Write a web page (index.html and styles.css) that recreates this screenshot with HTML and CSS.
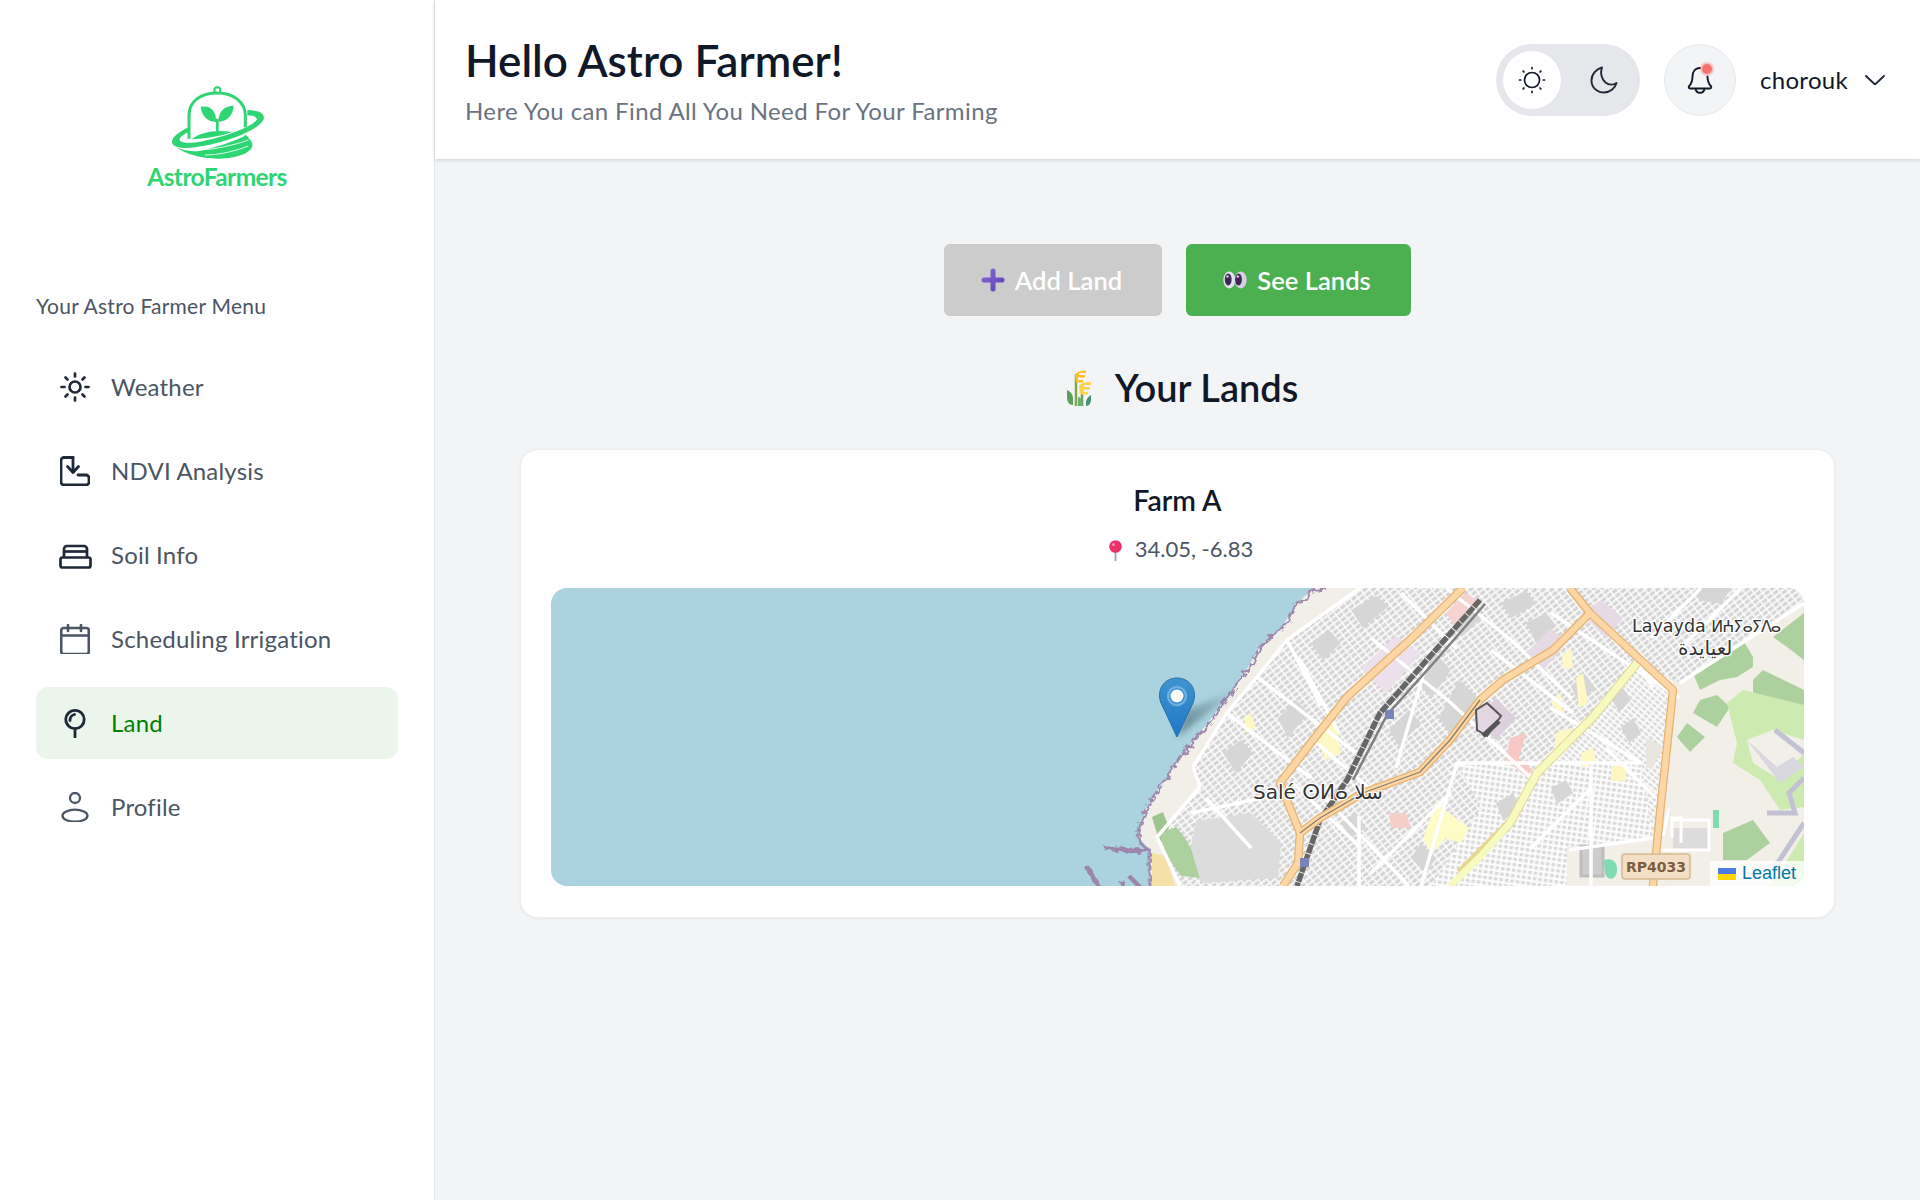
FILE: index.html
```html
<!DOCTYPE html>
<html lang="en">
<head>
<meta charset="utf-8">
<title>AstroFarmers</title>
<link rel="stylesheet" href="styles.css">
</head>
<body>
<div class="app">
  <aside class="sidebar">
    <div class="brand">
      <svg class="brand-mark" viewBox="510 138 285 222" aria-hidden="true">
        <circle cx="652" cy="151" r="9" fill="#fff" stroke="#2ed573" stroke-width="6"/>
        <path d="M567 296V225C567 182 605 159 652 159C700 159 735 186 736 225V262" fill="none" stroke="#2ed573" stroke-width="9"/>
        <path d="M575 298C600 277 645 268 696 276C655 291 612 296 575 298Z" fill="#2ed573"/>
        <path d="M652 274V236" stroke="#2ed573" stroke-width="8"/>
        <path d="M602 201C630 194 650 214 648 246C620 245 605 226 602 201Z" fill="#2ed573"/>
        <path d="M701 197C672 197 654 216 656 246C685 241 699 225 701 197Z" fill="#2ed573"/>
        <path d="M742 210C772 211 796 218 791 238C778 268 695 300 625 315C585 323 535 330 520 315C505 298 535 276 566 262L566 276C545 286 532 298 542 304C560 314 600 306 640 296C690 283 750 262 770 240C773 232 760 226 742 226Z" fill="#2ed573"/>
        <path d="M528 322C560 345 625 362 685 354C735 347 768 328 754 304L738 284L730 290C700 304 650 322 600 332C575 336 550 332 528 322Z" fill="#2ed573"/>
        <path d="M590 330C640 330 700 316 745 300M615 345C660 345 710 332 745 318" fill="none" stroke="#fff" stroke-width="2.5"/>
      </svg>
      <div class="brand-name">AstroFarmers</div>
    </div>
    <p class="menu-label">Your Astro Farmer Menu</p>
    <nav class="nav">
      <a class="nav-item">
        <svg class="nav-icon" viewBox="0 0 30 30" fill="none" stroke="#1f2937" stroke-width="2.700" stroke-linecap="round"><circle cx="15" cy="15" r="5.500"/><path d="M15 1.500v3M15 25.500v3M1.500 15h3M25.500 15h3M5.500 5.500l2 2M22.500 22.500l2 2M24.500 5.500l-2 2M7.500 22.500l-2 2"/></svg>
        <span>Weather</span>
      </a>
      <a class="nav-item">
        <svg class="nav-icon" viewBox="0 0 30 30" fill="none" stroke="#1f2937" stroke-width="2.800" stroke-linecap="round" stroke-linejoin="round"><path d="M13 1.500H4a3 3 0 0 0-3 3V26a3 3 0 0 0 3 3H26a3 3 0 0 0 3-3V22a3 3 0 0 0-3-3H18"/><path d="M13 1.500V16M7.500 10.500 13 16.500l5.500-6"/></svg>
        <span>NDVI Analysis</span>
      </a>
      <a class="nav-item">
        <svg class="nav-icon nav-icon-wide" viewBox="0 0 33 30" fill="none" stroke="#1f2937" stroke-width="2.700" stroke-linejoin="round"><path d="M5 17V9a3 3 0 0 1 3-3h17a3 3 0 0 1 3 3v8"/><path d="M5.500 11.500h22"/><rect x="1.500" y="17.500" width="30" height="10" rx="2"/></svg>
        <span>Soil Info</span>
      </a>
      <a class="nav-item">
        <svg class="nav-icon" viewBox="0 0 30 30" fill="none" stroke="#4b5563" stroke-width="2.600" stroke-linecap="round" stroke-linejoin="round"><rect x="1.200" y="4" width="27.600" height="26" rx="2.500"/><path d="M1.500 11.500h27M8 1v6M21 1v6"/></svg>
        <span>Scheduling Irrigation</span>
      </a>
      <a class="nav-item nav-item-active">
        <svg class="nav-icon" viewBox="0 0 30 30" fill="none" stroke="#1f2937" stroke-width="2.800" stroke-linecap="round"><circle cx="15" cy="11.500" r="9.200"/><path d="M15 21v8.500M10 12.500c0-3.500 2-5.500 4.500-6"/></svg>
        <span>Land</span>
      </a>
      <a class="nav-item">
        <svg class="nav-icon" viewBox="0 0 30 30" fill="none" stroke="#4b5563" stroke-width="2.300"><circle cx="15" cy="6" r="5"/><ellipse cx="15" cy="23.700" rx="12.500" ry="6"/></svg>
        <span>Profile</span>
      </a>
    </nav>
  </aside>

  <div class="main">
    <header class="topbar">
      <div class="greeting">
        <h1 class="greeting-title">Hello Astro Farmer!</h1>
        <p class="greeting-sub">Here You can Find All You Need For Your Farming</p>
      </div>
      <div class="topbar-actions">
        <div class="theme-toggle">
          <span class="theme-option theme-option-on">
            <svg class="theme-icon" viewBox="0 0 30 30" fill="none" stroke="#111827" stroke-width="1.700" stroke-linecap="round"><circle cx="15" cy="15" r="7.500"/><path d="M15 2.500v1.200M15 26.300v1.200M2.500 15h1.200M26.300 15h1.200M6.200 6.200 7 7M23 23l.8.8M23.800 6.200 23 7M7 23l-.8.8"/></svg>
          </span>
          <span class="theme-option">
            <svg class="theme-icon" viewBox="0 0 30 30" fill="none" stroke="#1f2937" stroke-width="1.900" stroke-linejoin="round"><path d="M13 2.500C8 3.800 2.500 8.500 2.500 15.500C2.500 22.500 8 27.500 15 27.500C21 27.500 26 23.500 27.500 18C24.500 20 20 20.300 16.500 17.500C12.500 14 11 8 13 2.500Z"/></svg>
          </span>
        </div>
        <button class="bell-button" type="button" aria-label="Notifications">
          <svg class="bell-icon" viewBox="0 0 30 30" fill="none" stroke="#111827" stroke-width="1.900" stroke-linejoin="round" stroke-linecap="round"><path d="M15 3C10 3 7.500 7 7.500 11.500C7.500 16.500 6.500 18.500 4.200 21C3.300 22 3.800 23.500 5.200 23.500H24.800C26.200 23.500 26.700 22 25.800 21C23.500 18.500 22.500 16.500 22.500 11.500"/><path d="M10.500 24c.6 2.500 2.300 3.800 4.500 3.800s3.900-1.300 4.500-3.800"/></svg>
          <span class="bell-dot"></span>
        </button>
        <div class="user-menu">
          <span class="user-name">chorouk</span>
          <svg class="user-caret" viewBox="0 0 20 10" fill="none" stroke="#1f2937" stroke-width="1.900" stroke-linecap="round" stroke-linejoin="round"><path d="M1 1l9 8.500L19 1"/></svg>
        </div>
      </div>
    </header>

    <main class="content">
      <div class="actions">
        <button class="action action-muted" type="button">
          <svg class="action-icon" viewBox="0 0 24 24"><defs><linearGradient id="plusGrad" x1="0" y1="0" x2="1" y2="1"><stop offset="0" stop-color="#8a6bd6"/><stop offset="1" stop-color="#5a3fb5"/></linearGradient></defs><path d="M12 0.500a2.500 2.500 0 0 1 2.500 2.500v6.500H21a2.500 2.500 0 0 1 0 5h-6.500V21a2.500 2.500 0 0 1-5 0v-6.500H3a2.500 2.500 0 0 1 0-5h6.500V3A2.500 2.500 0 0 1 12 .5Z" fill="url(#plusGrad)"/></svg>
          Add Land
        </button>
        <button class="action action-primary" type="button">
          <svg class="action-icon" viewBox="0 0 24 24"><ellipse cx="6.300" cy="12" rx="6" ry="8.500" fill="#e6dff0"/><ellipse cx="17.700" cy="12" rx="6" ry="8.500" fill="#d8cfe6"/><ellipse cx="5.200" cy="11.500" rx="3.400" ry="6" fill="#3a2a55"/><ellipse cx="15.500" cy="11.500" rx="3.400" ry="6" fill="#3a2a55"/><circle cx="4.500" cy="8.500" r="1.300" fill="#cfc2e6"/><circle cx="14.800" cy="8.500" r="1.300" fill="#cfc2e6"/></svg>
          See Lands
        </button>
      </div>

      <h2 class="section-title">
        <svg class="section-icon" viewBox="0 0 24 36"><path d="M9 36V4" stroke="#7fa84f" stroke-width="2.500"/><path d="M15 36V15" stroke="#6aa06a" stroke-width="2.500"/><path d="M8 5C10 1.500 14 .5 19 .5V3H12V5H18V7.500H11V10H16V12.500H9Z" fill="#fbc02d"/><path d="M12 16C14 13 18 12 24 12V15H17V17H23V19.500H16V22H21V24.500H13Z" fill="#fdd34a"/><path d="M0 20C3 21 6 24 6 29V35C2 35 0 32 0 27Z" fill="#5c9f5b"/><path d="M24 25C21 27 19 29 19 33V36C22 36 24 33 24 30Z" fill="#4c8f76"/><path d="M11 36V27C13 27 15 29 15 32V36Z" fill="#6fae71"/></svg>
        <span>Your Lands</span>
      </h2>

      <section class="land-card">
        <h3 class="land-name">Farm A</h3>
        <p class="land-coords">
          <svg class="coords-icon" viewBox="0 0 15 21"><path d="M7.500 10v11" stroke="#a99bc2" stroke-width="1.800"/><circle cx="7.500" cy="6.500" r="6.300" fill="#ec2f68"/><circle cx="5.500" cy="4.500" r="1.500" fill="#ff8fb1"/></svg>
          <span>34.05, -6.83</span>
        </p>
        <div class="map">
          <svg class="map-art" viewBox="0 0 1253 298" preserveAspectRatio="none" aria-label="Map of Salé">
            <defs>
              <pattern id="blocksA" width="7" height="5" patternUnits="userSpaceOnUse" patternTransform="rotate(-38)">
                <rect width="7" height="5" fill="#fbfbfb"/><rect x=".7" y=".7" width="5.400" height="3.200" fill="#d4d4d4"/>
              </pattern>
              <pattern id="blocksB" width="6" height="4.500" patternUnits="userSpaceOnUse" patternTransform="rotate(40)">
                <rect width="6" height="4.500" fill="#fdfdfd"/><rect x=".7" y=".7" width="4.400" height="2.600" fill="#d9d9d9"/>
              </pattern>
              <pattern id="blocksC" width="5.500" height="5.500" patternUnits="userSpaceOnUse" patternTransform="rotate(8)">
                <rect width="5.500" height="5.500" fill="#fdfdfd"/><rect x=".7" y=".9" width="3.600" height="3.200" fill="#d9d9d9"/>
              </pattern>
              <linearGradient id="markerGrad" x1="0" y1="0" x2="0" y2="1"><stop offset="0" stop-color="#3f93cf"/><stop offset="1" stop-color="#1f78c8"/></linearGradient>
              <linearGradient id="shadowGrad" x1="0" y1="1" x2="1" y2="0"><stop offset="0" stop-color="#2f4c5a" stop-opacity=".65"/><stop offset="1" stop-color="#2f4c5a" stop-opacity="0"/></linearGradient>
              <filter id="soft"><feGaussianBlur stdDeviation=".6"/></filter>
              <filter id="softer"><feGaussianBlur stdDeviation="3"/></filter>
              <filter id="rough" x="-5%" y="-5%" width="110%" height="110%"><feTurbulence type="fractalNoise" baseFrequency=".16" numOctaves="2" seed="4"/><feDisplacementMap in="SourceGraphic" scale="8"/></filter>
            </defs>
            <rect width="1253" height="298" fill="#aad3df"/>
            <g filter="url(#soft)">
              <path d="M763 0L746 15L729 42L709 59L689 92L672 115L646 149L629 169L616 189L596 219L587 249L599 262L599 298H1253V0Z" fill="#f2efe9"/>
              <g filter="url(#rough)">
                <path d="M775 0L762 3L755 12L746 15L738 32L729 42L720 50L709 59L702 74L689 92L680 106L672 115L660 134L646 149L637 161L629 169L620 183L616 189L605 205L596 219L590 235L587 249L590 256L599 262L599 298" fill="none" stroke="#a08ab0" stroke-width="3"/>
                <path d="M552 259L580 263L596 262M536 279L547 298M570 292L572 298M579 289L588 298" fill="none" stroke="#9c86ac" stroke-width="4.500"/>
              </g>
              <path d="M809 0L736 52L706 89L676 125L642 179L649 199L606 249L629 298H1016V259L1102 250L1116 159L1129 95L1253 15V0Z" fill="url(#blocksA)"/>
              <path d="M890 0L1253 0V15L1129 95L1116 159L1102 250L1016 259V298H909L986 185L1042 129L1086 75L1039 25L1019 0Z" fill="url(#blocksB)"/>
              <path d="M906 175L1090 175L1102 250L1016 259L1016 298H880L930 220Z" fill="url(#blocksC)"/>
              <path d="M1018 0L1253 0V15L1129 95L1086 75L1039 25Z" fill="url(#blocksA)"/>
              <path d="M601 229L612 224L618 240L609 256Z" fill="#9ec48f"/>
              <path d="M609 246L625 239C640 255 650 280 650 290L630 288C620 275 612 262 609 246Z" fill="#add19e"/>
              <path d="M601 265L615 268L624 298H601Z" fill="#f5e1a5"/>
              <path d="M645 233L700 225L730 255L727 290L650 295L640 260Z" fill="#dcdcdc"/>
              <path d="M672 165L690 152L702 165L685 185ZM727 130L745 112L757 125L737 150ZM760 55L778 42L790 55L772 72ZM800 22L825 8L838 18L812 40ZM905 30L920 18L930 30L912 48ZM950 15L975 3L985 16L960 30ZM975 35L995 25L1005 38L985 55ZM1020 98L1034 86L1044 100L1028 115ZM1145 0H1180L1170 16L1148 12ZM1060 110L1072 100L1080 112L1068 124ZM1070 140L1082 130L1090 145L1078 155ZM945 215L962 205L970 220L952 232ZM1000 200L1015 192L1022 205L1006 216ZM790 235L805 225L815 240L800 250ZM870 255L885 270L875 285L860 270Z" fill="#d6d6d6"/>
              <path d="M880 60L900 82L880 110L862 88ZM908 92L925 108L905 155L888 130ZM838 142L858 122L870 135L848 158Z" fill="#d6d6d6"/>
              <path d="M1030 25L1050 12L1072 30L1055 50ZM975 65L1000 40L1015 55L990 85Z" fill="#e5dae5"/>
              <path d="M810 80L845 48L870 65L835 105Z" fill="#ebe0eb"/>
              <path d="M895 25L915 5L930 15L905 40Z" fill="#f6d2d0"/>
              <path d="M924 132L945 110L965 130L945 152Z" fill="#dcd0dc"/>
              <path d="M959 150L975 145L968 170L982 182L975 188L955 172Z" fill="#f7c8c4"/>
              <path d="M838 225L855 225L860 240L840 240Z" fill="#f4cfca"/>
              <path d="M885 215L918 240L910 255L895 250L880 265L872 250Z" fill="#fdfbc6"/>
              <path d="M770 140L785 132L790 165L775 172L767 155ZM693 130L700 125L705 140L695 145ZM1005 145L1020 140L1015 160L1003 165ZM1025 90L1032 85L1037 115L1028 120ZM1000 115L1010 105L1012 130ZM1030 165L1042 160L1045 175L1030 180ZM1011 68L1020 60L1022 80L1012 80Z" fill="#fdf8c4"/>
              <path d="M1060 178H1075V193H1060Z" fill="#fdf6c0"/>
              <path d="M1095 150L1112 158L1102 180L1095 180Z" fill="#e8e6df"/>
              <path d="M1018 262L1102 250V298H1018Z" fill="#f2efe9"/>
              <path d="M1030 258H1052V288H1030Z" fill="#cdcdcd" stroke="#bdbdbd" stroke-width="3"/>
              <path d="M1122 92L1129 95L1253 15V298H1102L1116 159Z" fill="#f2efe9"/>
              <path d="M1142 85L1162 72L1192 52L1202 69L1202 79L1186 89L1169 92L1149 102Z" fill="#add19e"/>
              <path d="M1222 49L1253 25V72L1236 59Z" fill="#add19e"/>
              <path d="M1202 92L1212 82L1253 102V117H1202Z" fill="#add19e"/>
              <path d="M1149 112L1166 107L1179 119L1166 139L1142 125Z" fill="#add19e"/>
              <path d="M1126 149L1136 135L1154 149L1139 164Z" fill="#add19e"/>
              <path d="M1176 115L1192 102L1253 117V152L1222 142L1196 152L1202 175L1229 192L1253 165V219L1229 222L1209 192L1182 175L1186 155Z" fill="#cdebb0"/>
              <path d="M1172 245L1202 232L1219 255L1196 272L1172 272Z" fill="#add19e"/>
              <path d="M1225 290L1253 245V298H1215Z" fill="#cdebb0"/>
              <path d="M1196 152L1226 179L1242 169L1253 179L1229 195Z" fill="#d8d6de"/>
              <path d="M1224 142L1253 165M1253 190L1238 205L1244 225H1216M1253 235L1222 282" fill="none" stroke="#c3c1d4" stroke-width="5"/>
              <path d="M1122 240H1158V262H1122Z" fill="#dcdcdc"/>
              <path d="M1121 250V230H1130V255M1112 248L1118 220M1121 232H1158V262H1110" fill="none" stroke="#fff" stroke-width="3"/>
              <path d="M1162 222H1168V240H1162Z" fill="#7fdcb2"/>
              <path d="M1053 272C1060 270 1066 272 1066 282C1066 292 1056 294 1054 285Z" fill="#7fdcb2"/>
              <path d="M809 0L736 52L706 89L676 125L642 179M642 179L649 199L606 249L629 298M736 52L770 118M748 70L788 145M676 125L760 190M706 89L805 165M742 195L810 260M820 50L900 115L980 190M895 0L960 52L1020 110M1086 75L1102 100M940 62L1022 125M1090 175H906M906 175L870 298M880 60L845 180M1253 15L1129 95M1000 25L1128 110M1040 180V298M808 228L808 298M760 195L858 298M1018 262L1102 250M640 225L735 205M655 210L700 260M760 150L830 210M850 5L905 60M1000 120L1090 175M1055 160L1105 210M980 260L1040 200M820 285L900 205M1150 0L1100 50M1190 0L1130 60" fill="none" stroke="#fff" stroke-width="3.500" stroke-linejoin="round"/>
              <path d="M909 285L959 235L986 185L1042 129L1086 75" fill="none" stroke="#e4d790" stroke-width="9" stroke-linejoin="round"/>
              <path d="M899 298L929 269L959 235L986 185L1042 129L1086 75" fill="none" stroke="#f7fabf" stroke-width="7" stroke-linejoin="round"/>
              <path d="M929 12L882 65L829 125L796 192L769 232L746 298" fill="none" stroke="#666" stroke-width="5.500" stroke-dasharray="9 1"/>
              <path d="M934 16L887 70L836 127L802 192" fill="none" stroke="#808080" stroke-width="2.500"/>
              <path d="M912 0L862 49L796 109L762 152L729 195L749 245L747 275L732 298M749 245L769 230L812 205L869 184L899 152L929 112L952 92L1002 62L1039 25L1019 0M1039 25L1122 102L1116 159L1109 225L1102 298" fill="none" stroke="#e6b36f" stroke-width="8.500" stroke-linejoin="round"/>
              <path d="M912 0L862 49L796 109L762 152L729 195L749 245L747 275L732 298M749 245L769 230L812 205L869 184L899 152L929 112L952 92L1002 62L1039 25L1019 0M1039 25L1122 102L1116 159L1109 225L1102 298" fill="none" stroke="#fcd6a4" stroke-width="6" stroke-linejoin="round"/>
              <path d="M749 245L769 230L812 205L869 184L899 152L929 112" fill="none" stroke="#8d7d6a" stroke-width="1.300"/>
              <path d="M925 122L936 115L950 128L936 148L926 142Z" fill="#e3d6e3" stroke="#555" stroke-width="2"/>
              <path d="M932 148L948 133" stroke="#555" stroke-width="5"/>
              <rect x="834" y="122" width="9" height="9" fill="#7a84b8"/>
              <rect x="749" y="270" width="9" height="9" fill="#7a84b8"/>
            </g>
            <text class="map-label" x="702" y="211">Salé ⵙⵍⴰ سلا</text>
            <text class="map-label map-label-small" x="1081" y="44">Layayda <tspan class="map-label-tif">ⵍⵄⵢⴰⵢⴷⴰ</tspan></text>
            <text class="map-label map-label-ar" x="1127" y="67">لعيايدة</text>
            <rect class="map-shield" x="1071" y="266" width="68" height="25" rx="3"/>
            <text class="map-shield-text" x="1105" y="284">RP4033</text>
            <path d="M626 149L636 122L690 100L650 130Z" fill="url(#shadowGrad)" filter="url(#softer)"/>
            <path d="M626 149L610 115C605 102 613 90 626 90C639 90 647 102 642 115Z" fill="url(#markerGrad)" stroke="#2a6ea8" stroke-width="1"/>
            <circle cx="626" cy="108" r="9" fill="none" stroke="#6db0e0" stroke-width="2.500"/>
            <circle cx="626" cy="108" r="6.500" fill="#fff"/>
          </svg>
          <div class="attribution">
            <svg class="flag" viewBox="0 0 18 12"><rect width="18" height="6" fill="#4c7be1"/><rect y="6" width="18" height="6" fill="#ffd500"/></svg>
            <a class="attribution-link">Leaflet</a>
          </div>
        </div>
      </section>
    </main>
  </div>
</div>
</body>
</html>
```

FILE: styles.css
```css
* { box-sizing: border-box; }
html, body { margin: 0; height: 100%; }
body { font-family: "Lato", "Noto Sans", sans-serif; color: #111827; background: #f3f4f6; }
h1, h2, h3, p { margin: 0; }
button { font: inherit; border: 0; cursor: pointer; }

.app { display: flex; min-height: 1200px; }

.sidebar { width: 435px; flex: none; background: #fff; border-right: 1px solid #e5e7eb; padding: 0 36px; }
.brand { display: flex; flex-direction: column; align-items: center; padding-top: 86px; height: 289px; }
.brand-mark { width: 95px; height: 74px; display: block; }
.brand-name { font-size: 24.500px; font-weight: 700; color: #2ed573; line-height: 30px; margin-top: 2px; letter-spacing: -0.6px; }
.menu-label { font-size: 21px; line-height: 34px; color: #4b5563; letter-spacing: .25px; }

.nav { display: flex; flex-direction: column; gap: 12px; margin-top: 28px; }
.nav-item { display: flex; align-items: center; gap: 21px; height: 72px; padding-left: 24px; border-radius: 12px; font-size: 24px; color: #4b5563; letter-spacing: .2px; }
.nav-item span { margin-bottom: 2px; }
.nav-icon { width: 30px; height: 30px; flex: none; }
.nav-icon-wide { width: 33px; margin: 0 -1.500px; }
.nav-item-active { background: #ebf5ec; color: #008000; }

.main { flex: 1; min-width: 0; display: flex; flex-direction: column; }
.topbar { height: 159px; flex: none; background: #fff; box-shadow: 0 1px 4px rgba(0, 0, 0, .16); display: flex; align-items: center; justify-content: space-between; padding: 0 35px 0 30px; }
.greeting { padding-top: 5px; }
.greeting-title { font-size: 44px; font-weight: 600; line-height: 48px; color: #111827; }
.greeting-sub { font-size: 24px; line-height: 36px; margin-top: 9px; color: #6b7280; letter-spacing: .38px; }

.topbar-actions { display: flex; align-items: center; gap: 24px; }
.theme-toggle { display: flex; width: 144px; height: 72px; border-radius: 36px; background: #e5e7eb; padding: 7px; justify-content: space-between; }
.theme-option { width: 58px; height: 58px; border-radius: 50%; display: flex; align-items: center; justify-content: center; }
.theme-option-on { background: #fff; }
.theme-icon { width: 30px; height: 30px; }
.bell-button { position: relative; width: 72px; height: 72px; border-radius: 50%; background: #f3f4f6; border: 1px solid #e5e7eb; display: flex; align-items: center; justify-content: center; padding: 0; }
.bell-icon { width: 30px; height: 30px; }
.bell-dot { position: absolute; top: 19px; left: 37px; width: 10px; height: 10px; border-radius: 50%; background: #f87171; box-shadow: 0 0 0 2px rgba(248, 113, 113, .35); }
.user-menu { display: flex; align-items: center; gap: 17px; }
.user-name { font-size: 24px; color: #111827; letter-spacing: .3px; }
.user-caret { width: 20px; height: 10px; }

.content { padding: 85px 85px 0; }
.actions { display: flex; justify-content: center; gap: 24px; }
.action { height: 72px; display: flex; align-items: center; justify-content: center; gap: 10px; border-radius: 6px; font-size: 25.600px; font-weight: 600; color: #fff; }
.action-muted { width: 218px; background: #ccc; padding-left: 3px; }
.action-primary { width: 225px; background: #4caf50; padding-left: 3px; }
.action-icon { width: 24px; height: 24px; flex: none; }

.section-title { display: flex; align-items: center; justify-content: center; gap: 24px; height: 72px; margin-top: 36px; padding-left: 10px; font-size: 38px; font-weight: 600; color: #111827; }
.section-title span { margin-bottom: 2px; }
.section-icon { width: 24px; height: 36px; flex: none; }

.land-card { margin-top: 25px; height: 469px; background: #fff; border-radius: 18px; border: 1px solid #eceef1; box-shadow: 0 1px 3px rgba(0, 0, 0, .05); padding: 30px; display: flex; flex-direction: column; align-items: center; }
.land-name { font-size: 28.500px; font-weight: 600; line-height: 40px; color: #111827; }
.land-coords { display: flex; align-items: center; gap: 12px; margin-top: 14px; padding-left: 6px; font-size: 22px; line-height: 30px; color: #4b5563; }
.land-coords span { margin-bottom: 2px; }
.coords-icon { width: 15px; height: 21px; }

.map { position: relative; align-self: stretch; height: 298px; margin-top: 22px; border-radius: 16px; overflow: hidden; }
.map-art { display: block; width: 100%; height: 100%; }
.map-label { font-family: "DejaVu Sans", sans-serif; font-size: 20px; fill: #333; stroke: #fff; stroke-width: 2.500px; paint-order: stroke; }
.map-label-small { font-size: 17.500px; }
.map-label-tif { font-size: 16px; letter-spacing: -1px; }
.map-label-ar { font-size: 20px; }
.map-shield { fill: #f3dfc6; stroke: #d6b98f; stroke-width: 1.500px; }
.map-shield-text { font-family: "DejaVu Sans", sans-serif; font-size: 14px; font-weight: 700; fill: #7d5d3f; text-anchor: middle; }
.attribution { position: absolute; right: 0; bottom: 0; height: 25px; display: flex; align-items: center; gap: 6px; padding: 0 8px; background: rgba(255, 255, 255, .8); font-family: "Liberation Sans", sans-serif; font-size: 18px; }
.attribution-link { color: #0078a8; }
.flag { width: 18px; height: 12px; display: block; }
```
